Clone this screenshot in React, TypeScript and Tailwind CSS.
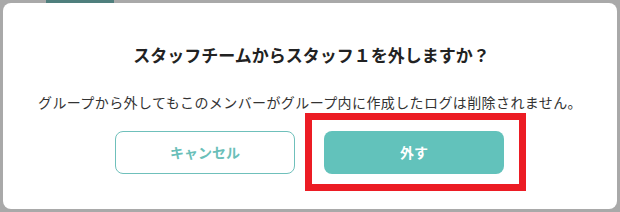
export default function App() {
  return (
    <div
      className="relative w-[620px] h-[212px] overflow-hidden bg-[#a9a9a9] pt-[3px] pl-[3px]"
      style={{ fontFamily: '"Noto Sans CJK JP", "Noto Sans", sans-serif' }}
    >
      {/* tab peeking out from the page behind the overlay */}
      <div className="absolute left-[46px] top-0 w-[68px] h-[3px] bg-[#4f7f7d]" />

      <div className="w-[614px] h-[206px] rounded-[8px] bg-white flex flex-col items-center pt-[36px]">
        <h2 className="text-[17px] leading-[32px] font-bold text-[#222] tracking-[0px] pl-[3px]">
          スタッフチームからスタッフ１を外しますか？
        </h2>
        <p className="mt-[20px] text-[14px] leading-[22px] text-[#333] tracking-[0.4px]">
          グループから外してもこのメンバーがグループ内に作成したログは削除されません。
        </p>
        <div className="mt-[18px] flex gap-[29px] pr-[1px]">
          <button
            type="button"
            className="w-[180px] h-[43px] rounded-[8px] border border-[#6fc0bb] bg-white text-[14px] font-bold text-[#6bbfb9]"
          >
            キャンセル
          </button>
          <div className="relative">
            <button
              type="button"
              className="w-[180px] h-[43px] rounded-[8px] bg-[#62c2bb] text-[14px] font-bold text-white"
            >
              外す
            </button>
            <div className="absolute left-[-19px] right-[-22px] top-[-18px] bottom-[-17px] border-[7px] border-[#ec1c24] pointer-events-none" />
          </div>
        </div>
      </div>
    </div>
  );
}
